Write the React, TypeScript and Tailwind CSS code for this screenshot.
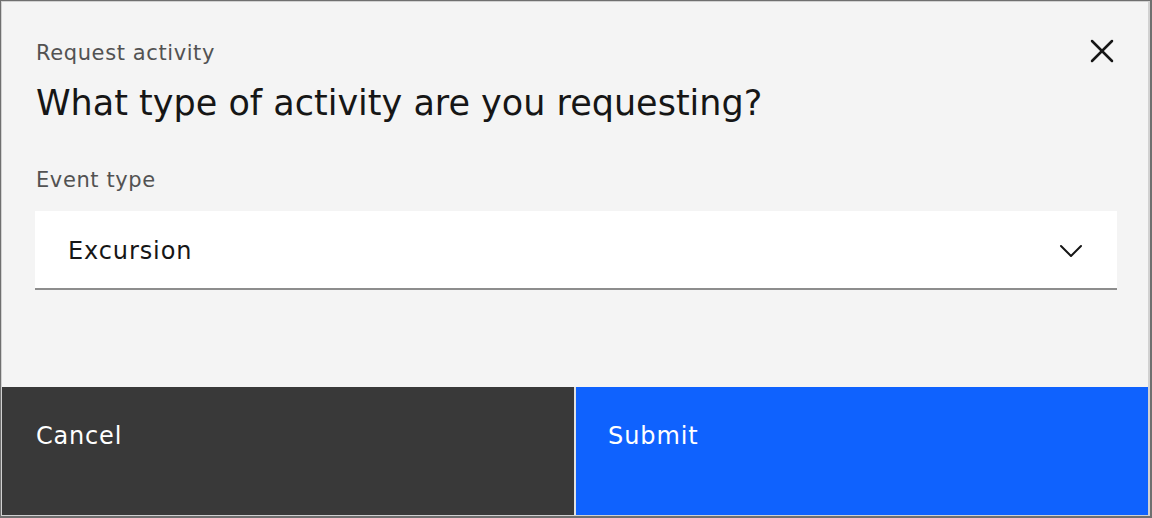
import { X, ChevronDown } from "lucide-react";

export default function App() {
  return (
    <div className="h-[518px] w-[1152px] bg-[#6f6f6f] pt-px pl-px pr-[2px] pb-[2px] font-['DejaVu_Sans','Liberation_Sans',sans-serif]">
      <div className="flex h-full flex-col border-y border-l border-r-2 border-[#d1d1d1] bg-[#f4f4f4] text-[#161616]">
        <div className="flex flex-1 flex-col pl-[34px] pr-[31px] pt-[36px]">
          <div className="flex items-start justify-between">
            <p className="text-[21px] leading-[30px] tracking-[0.6px] text-[#525252]">Request activity</p>
            <button className="-mr-[5px] -mt-[7px] text-[#161616]" aria-label="Close">
              <X className="h-[40px] w-[40px]" strokeWidth={1.5} />
            </button>
          </div>
          <h2 className="mt-[10px] text-[35px] leading-[44px]">What type of activity are you requesting?</h2>

          <label className="mt-[40px] text-[21px] leading-[30px] tracking-[0.6px] text-[#525252]">Event type</label>
          <div className="mt-[16px] -ml-px flex h-[79px] items-center justify-between border-b-2 border-[#8d8d8d] bg-white pl-[33px] pr-[26px] pt-[3px]">
            <span className="text-[24px] tracking-[0.9px]">Excursion</span>
            <ChevronDown className="h-[40px] w-[40px]" strokeWidth={1.2} />
          </div>
        </div>

        <div className="flex h-[128px] gap-[2px] bg-[#e0e0e0]">
          <div className="w-[572px] bg-[#393939] px-[34px] pt-[33px] text-[24px] leading-[32px] tracking-[0.8px] text-white">
            Cancel
          </div>
          <div className="flex-1 bg-[#0f62fe] px-[32px] pt-[33px] text-[24px] leading-[32px] tracking-[0.9px] text-white">
            Submit
          </div>
        </div>
      </div>
    </div>
  );
}
